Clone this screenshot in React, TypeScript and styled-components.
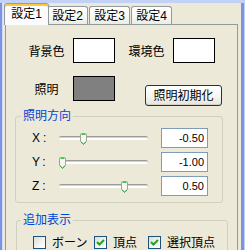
import React from "react";
import styled, { createGlobalStyle } from "styled-components";

const GlobalStyle = createGlobalStyle`
  html, body { margin: 0; padding: 0; background: #ece9d8; }
  body {
    font-family: "Liberation Sans", "Noto Sans CJK JP", sans-serif;
    font-size: 12px;
    color: #000;
  }
  * { box-sizing: border-box; }
`;

const Window = styled.div`
  width: 245px;
  height: 250px;
  overflow: hidden;
  display: flex;
  border-top: 3px solid #c2d2f7;
  border-right: 1px solid #c2d2f7;
`;

const Frame = styled.div`
  flex: 1;
  display: flex;
  min-width: 0;
  border-left: 2px solid #7d92e3;
  border-right: 3px solid #7d92e3;
`;

const Body = styled.div`
  flex: 1;
  display: flex;
  flex-direction: column;
  min-width: 0;
  border-left: 1px solid #d3dcf6;
  background: #ece9d8;
`;

const TabStrip = styled.div`
  display: flex;
  align-items: flex-end;
  height: 21px;
  padding-left: 1px;
`;

const Tab = styled.div<{ $active?: boolean }>`
  position: relative;
  display: flex;
  justify-content: center;
  line-height: 12px;
  border: 1px solid #919b9c;
  border-bottom: none;
  border-radius: 3px 3px 0 0;
  white-space: nowrap;
  ${(p) =>
    p.$active
      ? `
    z-index: 2;
    width: 45px;
    height: 22px;
    margin-bottom: -1px;
    margin-right: -3px;
    padding-top: 4px;
    background: #fcfcfe;
    border-top: 1px solid #e68b2c;
    box-shadow: inset 0 2px 0 #ffc83c;
  `
      : `
    width: 41px;
    height: 18px;
    margin-left: 1px;
    padding-top: 3px;
    background: linear-gradient(180deg, #ffffff 0%, #f7f7f4 60%, #ecebe5 100%);
  `}
`;

const Panel = styled.div`
  flex: 1;
  width: 233px;
  margin-left: 2px;
  border: 1px solid #919b9c;
  border-bottom: none;
  padding-top: 13px;
  background: #ece9d8;
`;

const TopSection = styled.div`
  display: flex;
  flex-direction: column;
  gap: 13px;
  padding-left: 14px;
`;

const Row = styled.div`
  display: flex;
  align-items: flex-start;
`;

const ColorField = styled.div<{ $gap?: number }>`
  display: flex;
  align-items: center;
  margin-left: ${(p) => p.$gap ?? 0}px;
`;

const FieldLabel = styled.span`
  width: 53px;
  text-align: center;
  padding-top: 2px;
  line-height: 12px;
`;

const Swatch = styled.div<{ $color: string }>`
  width: 42px;
  height: 25px;
  border: 1px solid #000;
  background: ${(p) => p.$color};
`;

const ResetButton = styled.button`
  width: 77px;
  height: 21px;
  margin: 9px 0 0 30px;
  padding: 0;
  font: inherit;
  line-height: 12px;
  color: #000;
  border: 1px solid #003c74;
  border-radius: 3px;
  background: linear-gradient(180deg, #ffffff 0%, #f6f6f2 55%, #e6e4da 100%);
  box-shadow: inset 0 -1px 0 #d6d0c5;
`;

const Group = styled.fieldset<{ $left: number; $width: number; $top: number; $pad: number; $padTop: number }>`
  margin: ${(p) => p.$top}px 0 0 ${(p) => p.$left}px;
  width: ${(p) => p.$width}px;
  min-width: 0;
  padding: ${(p) => p.$padTop}px 0 6px ${(p) => p.$pad}px;
  border: 1px solid #d0d0bf;
  border-radius: 3px;
`;

const Legend = styled.legend`
  padding: 0 2px;
  color: #0046d5;
  font-size: 12px;
  line-height: 12px;
`;

const SliderRows = styled.div`
  display: flex;
  flex-direction: column;
  gap: 4px;
  padding-left: 11px;
`;

const SliderRow = styled.div`
  display: flex;
  align-items: center;
  height: 20px;
`;

const AxisLabel = styled.span`
  width: 27px;
  letter-spacing: 3px;
  line-height: 12px;
`;

const Slider = styled.div`
  position: relative;
  width: 89px;
  height: 20px;
`;

const Track = styled.div`
  position: absolute;
  left: 0;
  right: 0;
  top: 8px;
  height: 4px;
  border-radius: 2px;
  background: #ffffff;
  border-top: 1px solid #9d9c99;
  box-shadow: inset 0 1px 0 #d4d2c8;
`;

const Thumb = styled.svg`
  position: absolute;
  top: 5px;
`;

const NumberBox = styled.input`
  width: 47px;
  height: 20px;
  margin-left: 13px;
  padding: 0 3px 0 0;
  border: 1px solid #7f9db9;
  background: #fff;
  font-family: "Liberation Sans", sans-serif;
  font-size: 11px;
  text-align: right;
  color: #000;
  outline: none;
`;

const CheckRow = styled.div`
  display: grid;
  grid-template-columns: 61px 54px auto;
  margin-left: 12px;
  height: 13px;
`;

const CheckItem = styled.label`
  display: flex;
  align-items: center;
  gap: 6px;
  line-height: 12px;
  white-space: nowrap;
`;

const Box = styled.span`
  display: flex;
  align-items: center;
  justify-content: center;
  width: 13px;
  height: 13px;
  border: 1px solid #1c5180;
  background: linear-gradient(135deg, #dcdcd7 0%, #f4f4f0 60%, #ffffff 100%);
`;

const ThumbIcon = ({ left }: { left: number }) => (
  <Thumb width="7" height="12" viewBox="0 0 7 12" style={{ left }}>
    <path
      d="M0.5 1.5 Q0.5 0.5 1.5 0.5 H5.5 Q6.5 0.5 6.5 1.5 V8.5 L3.5 11.5 L0.5 8.5 Z"
      fill="#f7f7f3"
      stroke="#a0a09a"
    />
    <path d="M1.5 1.5 H5.5" stroke="#3bc43b" />
    <path d="M1 8.8 L3.5 11 L6 8.8" stroke="#21a121" fill="none" />
  </Thumb>
);

const CheckMark = () => (
  <svg width="9" height="9" viewBox="0 0 9 9">
    <path d="M1 4 L3.5 6.5 L8 2" stroke="#21a121" strokeWidth="2" fill="none" />
  </svg>
);

const axes = [
  { name: "X:", value: -0.5 },
  { name: "Y:", value: -1.0 },
  { name: "Z:", value: 0.5 },
];

const checks = [
  { label: "ボーン", checked: false },
  { label: "頂点", checked: true },
  { label: "選択頂点", checked: true },
];

export default function App() {
  return (
    <>
      <GlobalStyle />
      <Window>
        <Frame>
          <Body>
            <TabStrip>
              <Tab $active>設定1</Tab>
              <Tab>設定2</Tab>
              <Tab>設定3</Tab>
              <Tab>設定4</Tab>
            </TabStrip>
            <Panel>
              <TopSection>
                <Row>
                  <ColorField>
                    <FieldLabel>背景色</FieldLabel>
                    <Swatch $color="#ffffff" />
                  </ColorField>
                  <ColorField $gap={5}>
                    <FieldLabel>環境色</FieldLabel>
                    <Swatch $color="#ffffff" />
                  </ColorField>
                </Row>
                <Row>
                  <ColorField>
                    <FieldLabel>照明</FieldLabel>
                    <Swatch $color="#808080" />
                  </ColorField>
                  <ResetButton>照明初期化</ResetButton>
                </Row>
              </TopSection>
              <Group $left={9} $width={208} $top={4} $pad={5} $padTop={6}>
                <Legend>照明方向</Legend>
                <SliderRows>
                  {axes.map((a) => (
                    <SliderRow key={a.name}>
                      <AxisLabel>{a.name}</AxisLabel>
                      <Slider>
                        <Track />
                        <ThumbIcon left={Math.round(((a.value + 1) / 2) * 83)} />
                      </Slider>
                      <NumberBox readOnly value={a.value.toFixed(2)} />
                    </SliderRow>
                  ))}
                </SliderRows>
              </Group>
              <Group $left={10} $width={212} $top={11} $pad={4} $padTop={10}>
                <Legend>追加表示</Legend>
                <CheckRow>
                  {checks.map((c) => (
                    <CheckItem key={c.label}>
                      <Box>{c.checked && <CheckMark />}</Box>
                      {c.label}
                    </CheckItem>
                  ))}
                </CheckRow>
              </Group>
            </Panel>
          </Body>
        </Frame>
      </Window>
    </>
  );
}
